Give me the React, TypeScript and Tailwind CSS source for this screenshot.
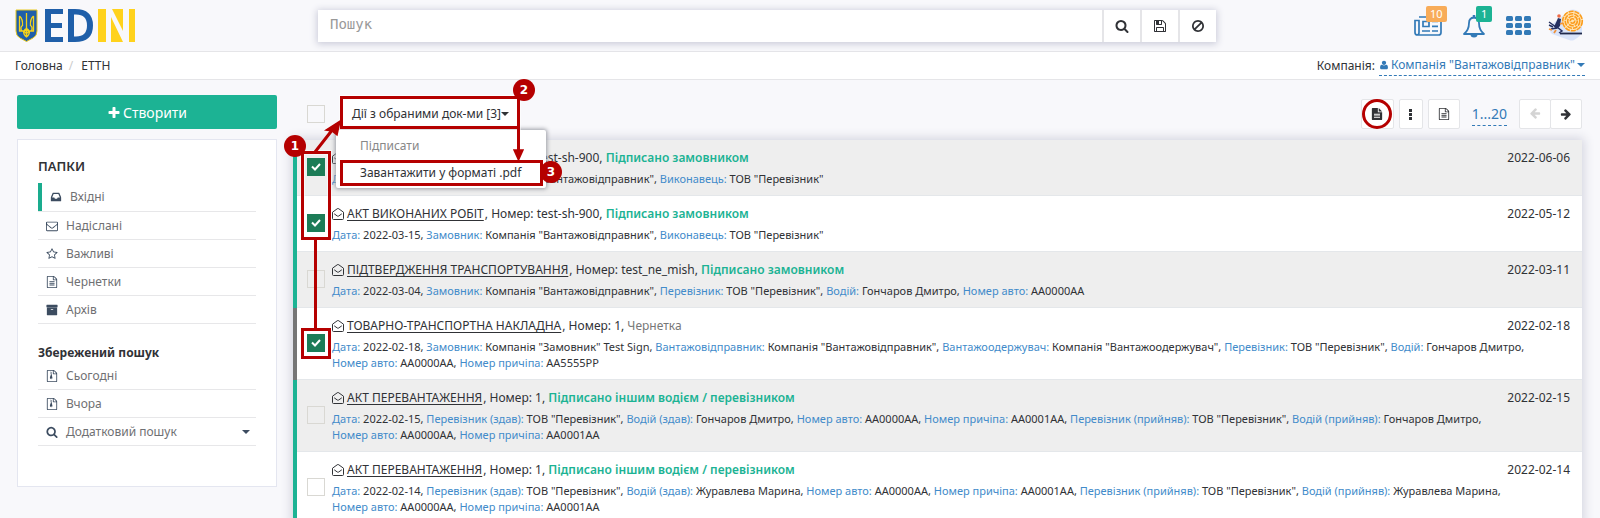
import React from "react";

type Pair = [string, string];
interface Doc {
  title: string;
  number: string;
  status: string;
  draft?: boolean;
  date: string;
  checked?: boolean;
  meta: Pair[];
}

const SHIPPER = 'Компанія "Вантажовідправник"';
const CARRIER = 'ТОВ "Перевізник"';

const docs: Doc[] = [
  {
    title: "АКТ ВИКОНАНИХ РОБІТ",
    number: "test-sh-900",
    status: "Підписано замовником",
    date: "2022-06-06",
    checked: true,
    meta: [["Дата", "2022-03-15"], ["Замовник", SHIPPER], ["Виконавець", CARRIER]],
  },
  {
    title: "АКТ ВИКОНАНИХ РОБІТ",
    number: "test-sh-900",
    status: "Підписано замовником",
    date: "2022-05-12",
    checked: true,
    meta: [["Дата", "2022-03-15"], ["Замовник", SHIPPER], ["Виконавець", CARRIER]],
  },
  {
    title: "ПІДТВЕРДЖЕННЯ ТРАНСПОРТУВАННЯ",
    number: "test_ne_mish",
    status: "Підписано замовником",
    date: "2022-03-11",
    meta: [
      ["Дата", "2022-03-04"],
      ["Замовник", SHIPPER],
      ["Перевізник", CARRIER],
      ["Водій", "Гончаров Дмитро"],
      ["Номер авто", "АА0000АА"],
    ],
  },
  {
    title: "ТОВАРНО-ТРАНСПОРТНА НАКЛАДНА",
    number: "1",
    status: "Чернетка",
    draft: true,
    date: "2022-02-18",
    checked: true,
    meta: [
      ["Дата", "2022-02-18"],
      ["Замовник", 'Компанія "Замовник" Test Sign'],
      ["Вантажовідправник", SHIPPER],
      ["Вантажоодержувач", 'Компанія "Вантажоодержувач"'],
      ["Перевізник", CARRIER],
      ["Водій", "Гончаров Дмитро"],
      ["Номер авто", "АА0000АА"],
      ["Номер причіпа", "АА5555РР"],
    ],
  },
  {
    title: "АКТ ПЕРЕВАНТАЖЕННЯ",
    number: "1",
    status: "Підписано іншим водієм / перевізником",
    date: "2022-02-15",
    meta: [
      ["Дата", "2022-02-15"],
      ["Перевізник (здав)", CARRIER],
      ["Водій (здав)", "Гончаров Дмитро"],
      ["Номер авто", "АА0000АА"],
      ["Номер причіпа", "АА0001АА"],
      ["Перевізник (прийняв)", CARRIER],
      ["Водій (прийняв)", "Гончаров Дмитро"],
      ["Номер авто", "АА0000АА"],
      ["Номер причіпа", "АА0001АА"],
    ],
  },
  {
    title: "АКТ ПЕРЕВАНТАЖЕННЯ",
    number: "1",
    status: "Підписано іншим водієм / перевізником",
    date: "2022-02-14",
    meta: [
      ["Дата", "2022-02-14"],
      ["Перевізник (здав)", CARRIER],
      ["Водій (здав)", "Журавлева Марина"],
      ["Номер авто", "АА0000АА"],
      ["Номер причіпа", "АА0001АА"],
      ["Перевізник (прийняв)", CARRIER],
      ["Водій (прийняв)", "Журавлева Марина"],
      ["Номер авто", "АА0000АА"],
      ["Номер причіпа", "АА0001АА"],
    ],
  },
];

const paths = {
  search:
    "M1216 832q0-185-131.5-316.5t-316.5-131.5-316.5 131.5-131.5 316.5 131.5 316.5 316.5 131.5 316.5-131.5 131.5-316.5zm512 832q0 52-38 90t-90 38q-54 0-90-38l-343-342q-179 124-399 124-143 0-273.5-55.5t-225-150-150-225-55.5-273.5 55.5-273.5 150-225 225-150 273.5-55.5 273.5 55.5 225 150 150 225 55.5 273.5q0 220-124 399l343 343q37 37 37 90z",
  ban: "M1440 893q0-161-87-295l-754 753q137 89 297 89 111 0 211.5-43.5t173.5-116.5 116-174.5 43-212.5zm-999 299l755-754q-135-91-300-91-148 0-273 73t-198 199-73 274q0 162 89 299zm1223-299q0 157-61 300t-163.5 246-245 164-298.5 61-298.5-61-245-164-163.5-246-61-300 61-299.5 163.5-245.5 245-164 298.5-61 298.5 61 245 164 163.5 245.5 61 299.5z",
  plus: "M1600 736v192q0 40-28 68t-68 28h-416v416q0 40-28 68t-68 28h-192q-40 0-68-28t-28-68v-416h-416q-40 0-68-28t-28-68v-192q0-40 28-68t68-28h416v-416q0-40 28-68t68-28h192q40 0 68 28t28 68v416h416q40 0 68 28t28 68z",
  floppy:
    "M512 1536h768v-384h-768v384zm896 0h128v-896q0-14-10-38.5t-20-34.5l-281-281q-10-10-34-20t-39-10v416q0 40-28 68t-68 28h-576q-40 0-68-28t-28-68v-416h-128v1280h128v-416q0-40 28-68t68-28h832q40 0 68 28t28 68v416zm-384-928v-320q0-13-9.5-22.5t-22.5-9.5h-192q-13 0-22.5 9.5t-9.5 22.5v320q0 13 9.5 22.5t22.5 9.5h192q13 0 22.5-9.5t9.5-22.5zm640 32v928q0 40-28 68t-68 28h-1344q-40 0-68-28t-28-68v-1344q0-40 28-68t68-28h928q40 0 88 20t76 48l280 280q28 28 48 76t20 88z",
  fileText:
    "M1596 380q28 28 48 76t20 88v1152q0 40-28 68t-68 28h-1344q-40 0-68-28t-28-68v-1600q0-40 28-68t68-28h896q40 0 88 20t76 48zm-444-244v376h376q-10-29-22-41l-313-313q-12-12-41-22zm384 1528v-1024h-416q-40 0-68-28t-28-68v-416h-768v1536h1280zm-1024-864q0-14 9-23t23-9h704q14 0 23 9t9 23v64q0 14-9 23t-23 9h-704q-14 0-23-9t-9-23v-64zm736 224q14 0 23 9t9 23v64q0 14-9 23t-23 9h-704q-14 0-23-9t-9-23v-64q0-14 9-23t23-9h704zm0 256q14 0 23 9t9 23v64q0 14-9 23t-23 9h-704q-14 0-23-9t-9-23v-64q0-14 9-23t23-9h704z",
  fileSolid:
    "M1152 0v512h512L1152 0zM1024 640V0H224q-40 0-68 28t-28 68v1600q0 40 28 68t68 28h1344q40 0 68-28t28-68V640zM448 860h896v130H448zM448 1116h896v130H448zM448 1372h896v130H448z",
  fileZip:
    "M1596 380q28 28 48 76t20 88v1152q0 40-28 68t-68 28h-1344q-40 0-68-28t-28-68v-1600q0-40 28-68t68-28h896q40 0 88 20t76 48zm-444-244v376h376q-10-29-22-41l-313-313q-12-12-41-22zm384 1528v-1024h-416q-40 0-68-28t-28-68v-416h-768v1536h1280zM640 256h128v128H640zM768 384h128v128H768zM640 512h128v128H640zM768 640h128v128H768zM670 800h200l90 370q20 200-190 220-220-20-190-220zM690 1180v90h160v-90z",
  star: "M1201 1004l306-297-422-62-189-382-189 382-422 62 306 297-73 421 378-199 377 199zm527-357q0 22-26 48l-363 354 86 500q1 7 1 20 0 50-41 50-19 0-40-12l-449-236-449 236q-22 12-40 12-21 0-31.5-14.5t-10.5-35.5q0-6 2-20l86-500-364-354q-25-27-25-48 0-37 56-46l502-73 225-455q19-41 49-41t49 41l225 455 502 73q56 9 56 46z",
  envelope:
    "M1664 1504v-768q-32 36-69 66-268 206-426 338-51 43-83 67t-86.5 48.5-102.5 24.5h-2q-48 0-102.5-24.5t-86.5-48.5-83-67q-158-132-426-338-37-30-69-66v768q0 13 9.5 22.5t22.5 9.5h1472q13 0 22.5-9.5t9.5-22.5zm0-1051v-24.5l-.5-13-3-12.5-5.5-9-9-7.5-14-2.5h-1472q-13 0-22.5 9.5t-9.5 22.5q0 168 147 284 193 152 401 317 6 5 35 29.5t46 37.5 44.5 31.5 50.5 27.5 43 9h2q20 0 43-9t50.5-27.5 44.5-31.5 46-37.5 35-29.5q208-165 401-317 54-43 100.5-115.5t46.5-131.5zm128-37v1088q0 66-47 113t-113 47h-1472q-66 0-113-47t-47-113v-1088q0-66 47-113t113-47h1472q66 0 113 47t47 113z",
  inbox:
    "M1151 960h316q-1-3-2.5-8.5t-2.5-7.5l-212-496h-708l-212 496q-1 3-2.5 8.5t-2.5 7.5h316l95 192h320zm513 30v482q0 26-19 45t-45 19h-1408q-26 0-45-19t-19-45v-482q0-62 25-123l238-552q10-25 36.5-42t52.5-17h832q26 0 52.5 17t36.5 42l238 552q25 61 25 123z",
  archive:
    "M1088 832q0-26-19-45t-45-19h-256q-26 0-45 19t-19 45 19 45 45 19h256q26 0 45-19t19-45zm576-192v960q0 26-19 45t-45 19h-1408q-26 0-45-19t-19-45v-960q0-26 19-45t45-19h1408q26 0 45 19t19 45zm64-448v256q0 26-19 45t-45 19h-1536q-26 0-45-19t-19-45v-256q0-26 19-45t45-19h1536q26 0 45 19t19 45z",
  arrow:
    "M1600 960q0 54-37 91l-651 651q-39 37-91 37-51 0-90-37l-75-75q-38-38-38-91t38-91l293-293h-704q-52 0-84.5-37.5t-32.5-90.5v-128q0-53 32.5-90.5t84.5-37.5h704l-293-294q-38-36-38-90t38-90l75-75q38-38 90-38 53 0 91 38l651 651q37 35 37 90z",
  user: "M1600 1405q0 120-73 189.5t-194 69.5h-874q-121 0-194-69.5t-73-189.5q0-53 3.5-103.5t14-109 26.5-108.5 43-97.5 62-81 85.5-53.5 111.5-20q9 0 42 21.5t74.5 48 108 48 133.5 21.5 133.5-21.5 108-48 74.5-48 42-21.5q61 0 111.5 20t85.5 53.5 62 81 43 97.5 26.5 108.5 14 109 3.5 103.5zm-320-893q0 159-112.5 271.5t-271.5 112.5-271.5-112.5-112.5-271.5 112.5-271.5 271.5-112.5 271.5 112.5 112.5 271.5z",
};

function Icon({ name, className = "size-3.5" }: { name: keyof typeof paths; className?: string }) {
  return (
    <svg viewBox="0 0 1792 1792" fill="currentColor" fillRule="evenodd" aria-hidden="true" className={`shrink-0 ${className}`}>
      <path d={paths[name]} />
    </svg>
  );
}

function Caret({ className = "" }: { className?: string }) {
  return (
    <svg viewBox="0 0 8 4" fill="currentColor" aria-hidden="true" className={`h-1 w-2 shrink-0 ${className}`}>
      <path d="M0 0h8L4 4z" />
    </svg>
  );
}

function OpenEnvelope() {
  return (
    <svg viewBox="0 0 12 12" fill="none" stroke="currentColor" aria-hidden="true" className="size-3 shrink-0">
      <path d="M.5 4.2v6.3a1 1 0 0 0 1 1h9a1 1 0 0 0 1-1V4.2L6.8.8a1.2 1.2 0 0 0-1.6 0z" />
      <path d="M2.2 5.8 5.3 8q.7.5 1.4 0l3.1-2.2" />
    </svg>
  );
}

function Logo() {
  return (
    <svg viewBox="0 0 120 33" role="img" aria-label="EDIN" className="h-[33px] w-[120px]">
      <path d="M1 1h21v21q0 5-4 7l-6.500 3.500L5 29q-4-2-4-7z" fill="#1f5fa9" stroke="#e9c81c" strokeWidth="1" />
      <g fill="none" stroke="#f5d21a" strokeWidth="1.300">
        <path d="M11.500 4v23M4.500 7v15h4.500q2.500 0 2.500-4M18.500 7v15H14q-2.500 0-2.500-4M4.500 7q3.500 3 3 9.500-2.500 1.500-1 5.500M18.500 7q-3.500 3-3 9.500 2.500 1.500 1 5.500M8.500 22q0 4 3 6 3-2 3-6" />
        <circle cx="11.500" cy="22" r="2" />
      </g>
      <path d="M30 0h18v5H36v9h11v5H36v9h12v5H30z" fill="#1f5fa9" />
      <path fillRule="evenodd" d="M53 0h7q18 0 18 16.500T60 33h-7zM59 5.500v22h2q11 0 11-11t-11-11z" fill="#1f5fa9" />
      <path d="M83 0h8v33h-8zM96 8l12 25H96zM97 0h11v22zM114 0h6v33h-6z" fill="#ffd21c" />
    </svg>
  );
}

function Newspaper() {
  return (
    <svg viewBox="0 0 28 20" fill="none" stroke="currentColor" strokeWidth="1.700" aria-hidden="true" className="h-5 w-7">
      <path d="M5 1h22v15.500q0 2.500-2.500 2.500H3.500Q1 19 1 16.500V4.500h4v12Q5 19 3 19" />
      <path d="M9 5.500h6v5H9zM8 15h8M18 5.500h6M18 10.300h6M18 15h6" />
    </svg>
  );
}

function Bell() {
  return (
    <svg viewBox="0 0 24 24" fill="none" stroke="currentColor" strokeWidth="1.800" strokeLinejoin="round" aria-hidden="true" className="size-6">
      <path d="M2 20q5-4 5-11 0-5 5-5.500Q17 4 17 9q0 7 5 11z" />
      <path d="M12 1v3" strokeWidth="2.500" />
      <path d="M8.500 20.500a3.500 3 0 0 0 7 0z" fill="currentColor" stroke="none" />
    </svg>
  );
}

function AppsGrid() {
  return (
    <svg viewBox="0 0 25 19" fill="currentColor" aria-hidden="true" className="h-[19px] w-[25px]">
      {[0, 7, 14].map((y) =>
        [0, 9, 18].map((x) => <rect key={`${x}-${y}`} x={x} y={y} width="7" height="5" rx="1.500" />)
      )}
    </svg>
  );
}

function Avatar() {
  return (
    <svg viewBox="0 0 36 34" role="img" aria-label="Профіль" className="h-[34px] w-9">
      <path d="M2 17 22 1q8-2 12 6v16q-1 4-8 8-2 1-5 0L4 25q-3-2-2-8z" fill="#d9e4fa" />
      <circle cx="24.500" cy="12" r="10.500" fill="#ffe6b8" />
      <g fill="none" stroke="#fb9c1c" strokeWidth="1.600" strokeDasharray="5 1">
        <circle cx="24.500" cy="12" r="9.800" />
        <circle cx="24.500" cy="12" r="7.300" />
        <circle cx="24.500" cy="12" r="4.800" />
        <circle cx="24.500" cy="12" r="2.200" />
      </g>
      <path d="M12 24.500h22" stroke="#202a4c" strokeWidth="1.800" />
      <path d="m10 9 3 1-1 7-3 3-3-2z" fill="#263060" />
      <path d="m1 13 7 5M3 20l6-1M9 18l5 4-3 2M1 16l4 2" stroke="#263060" strokeWidth="1.500" fill="none" />
      <path d="m12 15 3-1M1 20l3 1M8 21l-2 3" stroke="#f0923a" strokeWidth="1.800" />
      <circle cx="11" cy="7" r="1.800" fill="#ee6a45" />
    </svg>
  );
}

function Check({ label, defaultChecked = false }: { label: string; defaultChecked?: boolean }) {
  return (
    <span className="grid size-[18px] shrink-0 place-items-center">
      <input
        type="checkbox"
        aria-label={label}
        defaultChecked={defaultChecked}
        className="peer col-start-1 row-start-1 size-[18px] appearance-none border border-[#d9d8d3] checked:border-[#1c7c57] checked:bg-[#1c7c57]"
      />
      <svg
        viewBox="0 0 10 8"
        fill="none"
        stroke="#fff"
        strokeWidth="2"
        aria-hidden="true"
        className="pointer-events-none invisible col-start-1 row-start-1 h-2 w-2.5 peer-checked:visible"
      >
        <path d="m1 3.500 3 3L9 1" />
      </svg>
    </span>
  );
}

function SideRow({ icon, text, caret = false }: { icon: keyof typeof paths; text: string; caret?: boolean }) {
  return (
    <li className="border-b border-[#e7e7e9]">
      <a href="#" className="flex h-[27px] items-center gap-2 pr-1.5 pl-2 text-[#6f7073]">
        <Icon name={icon} className="size-3 text-[#3c4c60]" />
        {text}
        {caret && <Caret className="ml-auto text-[#3c4c60]" />}
      </a>
    </li>
  );
}

function Sidebar() {
  return (
    <aside className="flex w-[260px] shrink-0 flex-col gap-2.5">
      <button type="button" className="flex h-[34px] items-center justify-center gap-0.5 rounded-xs bg-[#1cb394] pt-0.5 text-sm text-white">
        <Icon name="plus" className="size-3.5" />
        Створити
      </button>
      <nav className="border border-[#e4e6f0] bg-white px-5 pt-4 pb-10">
        <h2 className="mb-[7px] text-[13px] font-semibold leading-5">ПАПКИ</h2>
        <ul>
          <li className="border-b border-[#e7e7e9]">
            <a href="#" className="flex h-7 items-center gap-2 border-l-4 border-[#1aac8e] pl-2 text-[#6f7073]">
              <Icon name="inbox" className="size-3 text-[#3c4c60]" />
              Вхідні
            </a>
          </li>
          <SideRow icon="envelope" text="Надіслані" />
          <SideRow icon="star" text="Важливі" />
          <SideRow icon="fileText" text="Чернетки" />
          <SideRow icon="archive" text="Архів" />
        </ul>
        <h2 className="mt-5 font-bold leading-[18px]">Збережений пошук</h2>
        <ul>
          <SideRow icon="fileZip" text="Сьогодні" />
          <SideRow icon="fileZip" text="Вчора" />
          <SideRow icon="search" text="Додатковий пошук" caret />
        </ul>
      </nav>
    </aside>
  );
}

function DocRow({ doc, shaded }: { doc: Doc; shaded: boolean }) {
  return (
    <li className={`flex ${doc.draft ? "bg-[#767676]" : "bg-[#1cb394]"}`}>
      <div
        className={`ml-1 flex min-w-0 flex-1 items-center gap-[7px] border-b border-[#e4e7ea] pr-3 pl-2.5 ${
          shaded ? "bg-[#eeeeee]" : "bg-white"
        }`}
      >
        <div className="pb-0.5">
          <Check label={`${doc.title} ${doc.date}`} defaultChecked={doc.checked} />
        </div>
        <div className="min-w-0 flex-1 py-2">
          <div className="flex items-center leading-5">
            <OpenEnvelope />
            <a href="#" className="mr-px ml-[3px] underline underline-offset-2">
              {doc.title}
            </a>
            <span>, Номер: {doc.number},&nbsp;</span>
            <span className={doc.draft ? "text-[#777]" : "font-semibold text-[#1cb394]"}>{doc.status}</span>
            <time className="ml-auto">{doc.date}</time>
          </div>
          <p className="mt-[3px] mr-7 text-[11px] leading-4">
            {doc.meta.map(([label, value], i) => (
              <React.Fragment key={i}>
                <span className="whitespace-nowrap">
                  <span className="text-[#428bca]">{label}:</span> {value}
                  {i < doc.meta.length - 1 && ","}
                </span>{" "}
              </React.Fragment>
            ))}
          </p>
        </div>
      </div>
    </li>
  );
}

function Step({ n, className }: { n: number; className: string }) {
  return (
    <span
      className={`absolute z-30 flex size-[22px] items-center justify-center rounded-full bg-[#b50000] font-['DejaVu_Sans',sans-serif] text-[12px] font-bold text-white ${className}`}
    >
      {n}
    </span>
  );
}

function Guide() {
  return (
    <div className="pointer-events-none">
      <svg
        viewBox="0 0 290 290"
        fill="none"
        stroke="#b50000"
        strokeWidth="3"
        aria-hidden="true"
        className="absolute -top-4 left-0 z-20 h-[290px] w-[290px]"
      >
        <g stroke="#fff" strokeOpacity=".5" strokeWidth="5">
          <path d="M9.500 73.500h27v86h-27zM9.500 250.500h27v28h-27zM48.500 18.500h177v30h-177zM48.500 82.500h200v23h-200z" />
        </g>
        <path d="M9.500 73.500h27v86h-27zM9.500 250.500h27v28h-27zM48.500 18.500h177v30h-177zM48.500 82.500h200v23h-200z" />
        <path d="M22.500 160v90M22 73l18-23M225.500 49v24" />
        <path d="m47 42-3 14-5-4-6-1zM221 71h9l-4.500 10z" fill="#b50000" strokeWidth="1.500" />
      </svg>
      <Step n={1} className="-left-[9px] top-10" />
      <Step n={2} className="-top-4 left-[220px]" />
      <Step n={3} className="left-[247px] top-[66px]" />
    </div>
  );
}

const toolBtn = "flex h-[30px] items-center justify-center rounded-xs border border-[#e4e5e8] bg-white";

export default function App() {
  return (
    <div className="min-h-screen overflow-hidden bg-[#f8f8fb] font-['Noto_Sans',sans-serif] text-xs text-[#303236]">
      <header className="flex h-[52px] items-center border-b border-[#e5e5e8]">
        <a href="#" className="w-[318px] shrink-0 pl-[15px]">
          <Logo />
        </a>
        <form className="flex h-8 min-w-0 flex-1 gap-0.5 bg-[#e5e5e8] shadow-[0_1px_7px_1px_#c9cad8]" onSubmit={(e) => e.preventDefault()}>
          <input
            aria-label="Пошук"
            placeholder="Пошук"
            className="min-w-0 flex-1 bg-white px-3 pb-1 font-['DejaVu_Sans_Mono',monospace] text-sm placeholder:text-[#999] focus:outline-none"
          />
          <button type="button" aria-label="Знайти" className="flex w-9 items-center justify-center bg-white">
            <Icon name="search" />
          </button>
          <button type="button" aria-label="Зберегти пошук" className="flex w-9 items-center justify-center bg-white">
            <Icon name="floppy" />
          </button>
          <button type="button" aria-label="Очистити" className="flex w-9 items-center justify-center bg-white">
            <Icon name="ban" />
          </button>
        </form>
        <div className="flex w-[384px] shrink-0 items-center justify-end pr-4 text-[#337ab7]">
          <button type="button" aria-label="Новини" className="relative mr-5">
            <Newspaper />
            <span className="absolute -top-2.5 left-3 rounded-xs bg-[#f8ac59] px-1 text-[11px] leading-4 text-white">10</span>
          </button>
          <button type="button" aria-label="Сповіщення" className="relative mr-5">
            <Bell />
            <span className="absolute -top-2 left-3.5 rounded-xs bg-[#1cb394] px-[5px] text-[11px] leading-4 text-white">1</span>
          </button>
          <button type="button" aria-label="Сервіси" className="mr-[17px]">
            <AppsGrid />
          </button>
          <button type="button">
            <Avatar />
          </button>
        </div>
      </header>

      <div className="flex h-7 items-center justify-between border-b border-[#e5e5e8] bg-white px-[15px]">
        <nav className="flex">
          <a href="#">Головна</a>
          <span className="mx-1.5 text-[#ccc]">/</span>
          <a href="#" className="ml-0.5">ЕТТН</a>
        </nav>
        <div className="flex items-center gap-1">
          Компанія:
          <button type="button" className="flex h-5 items-center gap-0.5 border-b border-dashed border-[#337ab7] text-[#337ab7]">
            <Icon name="user" className="size-2.5" />
            Компанія "Вантажовідправник"
            <Caret />
          </button>
        </div>
      </div>

      <div className="flex gap-4 pt-[15px] pr-[18px] pl-[17px]">
        <Sidebar />
        <main className="relative min-w-0 flex-1">
          <div className="flex h-[45px] items-start justify-between">
            <div className="flex items-start gap-[15px] pl-3.5">
              <div className="pt-2.5">
                <Check label="Обрати всі" />
              </div>
              <div className="relative">
                <button type="button" aria-expanded="true" className="flex h-[34px] w-[180px] items-center bg-white pt-1 pl-3 whitespace-nowrap">
                  Дії з обраними док-ми [3]
                  <Caret />
                </button>
                <ul className="absolute top-[35px] -left-1 z-10 w-[210px] rounded-xs bg-white pt-1 shadow-[0_0_4px_1px_#9a9ca4]">
                  <li>
                    <button type="button" className="block h-6 pl-6 text-[#888]">Підписати</button>
                  </li>
                  <li>
                    <button type="button" className="block h-[30px] pl-6">Завантажити у форматі .pdf</button>
                  </li>
                </ul>
              </div>
            </div>
            <div className="flex items-center gap-[5px] pt-1">
              <button type="button" aria-label="Документ" className={`${toolBtn} relative w-[33px]`}>
                <Icon name="fileSolid" className="size-3" />
                <span className="absolute -top-px left-0 size-[30px] rounded-full border-[3px] border-[#b50000]" />
              </button>
              <button type="button" aria-label="Меню" className={`${toolBtn} w-6`}>
                <svg viewBox="0 0 3 11" fill="currentColor" aria-hidden="true" className="h-[11px] w-[3px]">
                  <path d="M0 0h3v3H0zM0 4h3v3H0zM0 8h3v3H0z" />
                </svg>
              </button>
              <button type="button" aria-label="Звіт" className={`${toolBtn} w-8`}>
                <Icon name="fileText" className="size-3" />
              </button>
              <button type="button" className="mx-[7px] h-6 border-b border-dashed border-[#337ab7] text-sm leading-5 text-[#337ab7]">
                1...20
              </button>
              <div className="flex">
                <button type="button" aria-label="Попередня" className={`${toolBtn} w-8 text-[#d4d4d4]`}>
                  <Icon name="arrow" className="size-3 rotate-180" />
                </button>
                <button type="button" aria-label="Наступна" className={`${toolBtn} -ml-px w-8`}>
                  <Icon name="arrow" className="size-3" />
                </button>
              </div>
            </div>
          </div>
          <ul className="shadow-[0_0_10px_2px_#d3d4df]">
            {docs.map((doc, i) => (
              <DocRow key={i} doc={doc} shaded={i % 2 === 0} />
            ))}
          </ul>
          <Guide />
        </main>
      </div>
    </div>
  );
}
